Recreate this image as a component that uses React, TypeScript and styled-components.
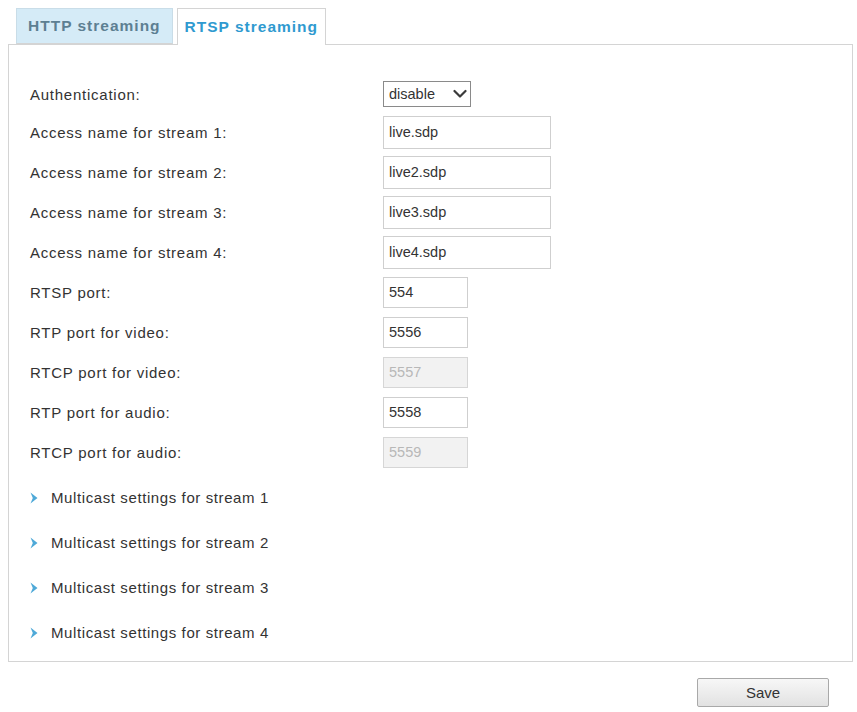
import { FC } from "react";
import styled, { createGlobalStyle } from "styled-components";

type FieldRow = {
  label: string;
  value: string;
  size: "long" | "short";
  disabled?: boolean;
};

const fieldRows: FieldRow[] = [
  { label: "Access name for stream 1:", value: "live.sdp", size: "long" },
  { label: "Access name for stream 2:", value: "live2.sdp", size: "long" },
  { label: "Access name for stream 3:", value: "live3.sdp", size: "long" },
  { label: "Access name for stream 4:", value: "live4.sdp", size: "long" },
  { label: "RTSP port:", value: "554", size: "short" },
  { label: "RTP port for video:", value: "5556", size: "short" },
  { label: "RTCP port for video:", value: "5557", size: "short", disabled: true },
  { label: "RTP port for audio:", value: "5558", size: "short" },
  { label: "RTCP port for audio:", value: "5559", size: "short", disabled: true },
];

const multicastStreams = [1, 2, 3, 4];

const App: FC = () => {
  return (
    <>
      <GlobalStyle />
      <Page>
        <TabBar>
          <Tab>HTTP streaming</Tab>
          <Tab $active>RTSP streaming</Tab>
        </TabBar>
        <Panel>
          <AuthRow>
            <Label>Authentication:</Label>
            <SelectWrap>
              <Select defaultValue="disable">
                <option value="disable">disable</option>
                <option value="basic">basic</option>
                <option value="digest">digest</option>
              </Select>
              <Chevron viewBox="0 0 14 10" aria-hidden>
                <path d="M1.5 2 L7 7.5 L12.5 2" />
              </Chevron>
            </SelectWrap>
          </AuthRow>
          {fieldRows.map((row) => (
            <Row key={row.label}>
              <Label>{row.label}</Label>
              <TextInput
                $size={row.size}
                defaultValue={row.value}
                disabled={row.disabled}
              />
            </Row>
          ))}
          <MulticastList>
            {multicastStreams.map((n) => (
              <MulticastRow key={n}>
                <Arrow viewBox="0 0 8 12" aria-hidden>
                  <path d="M0.5 0.5 L7.5 6 L0.5 11.5 L2.8 6 Z" />
                </Arrow>
                <MulticastText>{`Multicast settings for stream ${n}`}</MulticastText>
              </MulticastRow>
            ))}
          </MulticastList>
        </Panel>
        <Footer>
          <SaveButton type="button">Save</SaveButton>
        </Footer>
      </Page>
    </>
  );
};

export default App;

const GlobalStyle = createGlobalStyle`
  body {
    margin: 0;
    background: #ffffff;
    font-family: "Liberation Sans", Arial, sans-serif;
    color: #333333;
  }
`;

const Page = styled.div`
  width: 857px;
  padding-top: 8px;
  padding-left: 8px;
  box-sizing: border-box;
`;

const TabBar = styled.div`
  display: flex;
  gap: 4px;
  margin-left: 8px;
  height: 36px;
`;

const Tab = styled.div<{ $active?: boolean }>`
  position: relative;
  z-index: ${(p) => (p.$active ? 1 : 0)};
  display: flex;
  align-items: center;
  box-sizing: border-box;
  height: ${(p) => (p.$active ? "37px" : "36px")};
  padding: 0 ${(p) => (p.$active ? "7px" : "11px")};
  border: 1px solid ${(p) => (p.$active ? "#d4d4d4" : "#c9dde8")};
  border-bottom: ${(p) => (p.$active ? "none" : "1px solid #d4d4d4")};
  background: ${(p) => (p.$active ? "#ffffff" : "#d5ebf7")};
  color: ${(p) => (p.$active ? "#2f9ad0" : "#5d7f92")};
  font-size: 15.5px;
  font-weight: bold;
  letter-spacing: 1px;
  cursor: pointer;
`;

const Panel = styled.div`
  width: 845px;
  box-sizing: border-box;
  border: 1px solid #d4d4d4;
  padding: 31px 0 6px 21px;
`;

const Row = styled.div`
  display: grid;
  grid-template-columns: 353px auto;
  align-items: center;
  justify-content: start;
  height: 40px;
`;

const AuthRow = styled(Row)`
  height: 36px;
`;

const Label = styled.span`
  font-size: 15px;
  letter-spacing: 0.75px;
  color: #333333;
`;

const SelectWrap = styled.div`
  position: relative;
  width: 88px;
  height: 26px;
`;

const Select = styled.select`
  appearance: none;
  width: 100%;
  height: 100%;
  box-sizing: border-box;
  border: 1px solid #8a8a8a;
  border-radius: 0;
  background: #ffffff;
  padding: 0 0 0 5px;
  font-family: "Liberation Sans", Arial, sans-serif;
  font-size: 14.5px;
  color: #333333;
  outline: none;
`;

const Chevron = styled.svg`
  position: absolute;
  right: 4px;
  top: 8px;
  width: 14px;
  height: 10px;
  pointer-events: none;

  path {
    fill: none;
    stroke: #3a3a3a;
    stroke-width: 2.2;
    stroke-linecap: round;
    stroke-linejoin: round;
  }
`;

const TextInput = styled.input<{ $size: "long" | "short" }>`
  box-sizing: border-box;
  width: ${(p) => (p.$size === "long" ? "168px" : "85px")};
  height: ${(p) => (p.$size === "long" ? "33px" : "31px")};
  border: 1px solid #cfcfcf;
  padding: 0 5px;
  font-family: "Liberation Sans", Arial, sans-serif;
  font-size: 14.5px;
  color: #333333;
  background: #ffffff;
  outline: none;

  &:disabled {
    background: #f2f2f2;
    color: #b8b8b8;
    border-color: #d6d6d6;
  }
`;

const MulticastList = styled.div`
  display: flex;
  flex-direction: column;
  padding-top: 3px;
`;

const MulticastRow = styled.div`
  display: flex;
  align-items: center;
  height: 45px;
  cursor: pointer;
`;

const Arrow = styled.svg`
  width: 8px;
  height: 12px;
  margin-right: 13px;

  path {
    fill: #4ea9d8;
  }
`;

const MulticastText = styled.span`
  font-size: 15px;
  letter-spacing: 0.6px;
  color: #333333;
`;

const Footer = styled.div`
  display: flex;
  justify-content: flex-end;
  padding-right: 28px;
  margin-top: 16px;
`;

const SaveButton = styled.button`
  width: 132px;
  height: 29px;
  border: 1px solid #a9a9a9;
  border-radius: 2px;
  background: linear-gradient(#f7f7f7, #e2e2e2);
  font-family: "Liberation Sans", Arial, sans-serif;
  font-size: 15px;
  color: #333333;
  cursor: pointer;
`;
